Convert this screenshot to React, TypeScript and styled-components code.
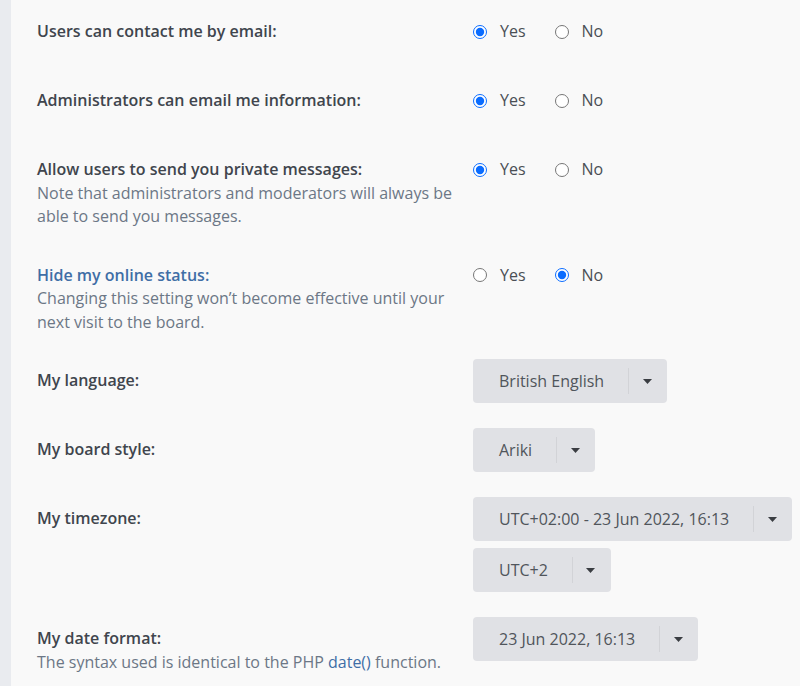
import React from "react";
import styled, { createGlobalStyle } from "styled-components";

const Global = createGlobalStyle`
  html, body { margin: 0; padding: 0; background: #f9f9f9; }
  body { font-family: "Open Sans", "Noto Sans", sans-serif; }
  * { box-sizing: border-box; }
`;

const Page = styled.div`
  min-height: 686px;
  border-left: 11px solid #e9ebef;
  background: #f9f9f9;
  padding: 10px 0 0 26px;
  display: flex;
  flex-direction: column;
  gap: 25px;
`;

const Row = styled.div`
  display: grid;
  grid-template-columns: 436px 1fr;
  align-items: start;
`;

const Term = styled.div`
  padding-top: 10px;
  font-size: 16px;
  line-height: 23.5px;
`;

const Label = styled.div<{ $active?: boolean }>`
  font-weight: 600;
  color: ${(p) => (p.$active ? "#3f6ea6" : "#40454d")};
`;

const Explain = styled.div`
  color: #6c7786;
  font-weight: 400;
`;

const Link = styled.a`
  color: #3f6ea6;
  text-decoration: none;
`;

const Choices = styled.div`
  display: flex;
  align-items: flex-start;
  gap: 29px;
  padding-top: 10px;
  height: 44px;
`;

const Choice = styled.label`
  display: flex;
  align-items: center;
  gap: 13px;
  font-size: 16px;
  line-height: 23.5px;
  color: #4a4f55;
`;

const Radio = styled.input`
  margin: 0;
  width: 14px;
  height: 14px;
  accent-color: #0a6cff;
`;

const Stack = styled.div`
  display: flex;
  flex-direction: column;
  align-items: flex-start;
  gap: 7px;
`;

const Select = styled.div`
  display: inline-flex;
  align-items: center;
  height: 44px;
  background: #e0e1e5;
  border-radius: 4px;
  font-size: 16px;
  color: #50555b;
`;

const Value = styled.span`
  padding: 0 24px 0 26px;
  white-space: nowrap;
`;

const Divider = styled.span`
  width: 1px;
  height: 26px;
  background: #d2d3d7;
`;

const Caret = styled.span`
  width: 38px;
  display: flex;
  justify-content: center;
  align-items: center;
  padding-right: 2px;
`;

const Arrow = () => (
  <svg width="9" height="5" viewBox="0 0 9 5">
    <path d="M0 0h9L4.5 5z" fill="#3a3d42" />
  </svg>
);

const Dropdown = ({ value }: { value: string }) => (
  <Select>
    <Value>{value}</Value>
    <Divider />
    <Caret>
      <Arrow />
    </Caret>
  </Select>
);

const YesNo = ({ name, yes }: { name: string; yes: boolean }) => (
  <Choices>
    <Choice>
      <Radio type="radio" name={name} defaultChecked={yes} />
      Yes
    </Choice>
    <Choice>
      <Radio type="radio" name={name} defaultChecked={!yes} />
      No
    </Choice>
  </Choices>
);

export default function App() {
  return (
    <>
      <Global />
      <Page>
        <Row>
          <Term>
            <Label>Users can contact me by email:</Label>
          </Term>
          <YesNo name="email" yes />
        </Row>
        <Row>
          <Term>
            <Label>Administrators can email me information:</Label>
          </Term>
          <YesNo name="massemail" yes />
        </Row>
        <Row>
          <Term>
            <Label>Allow users to send you private messages:</Label>
            <Explain>
              Note that administrators and moderators will always be able to send you messages.
            </Explain>
          </Term>
          <YesNo name="pm" yes />
        </Row>
        <Row>
          <Term>
            <Label $active>Hide my online status:</Label>
            <Explain>
              Changing this setting won’t become effective until your next visit to the board.
            </Explain>
          </Term>
          <YesNo name="hide" yes={false} />
        </Row>
        <Row>
          <Term>
            <Label>My language:</Label>
          </Term>
          <Stack>
            <Dropdown value="British English" />
          </Stack>
        </Row>
        <Row>
          <Term>
            <Label>My board style:</Label>
          </Term>
          <Stack>
            <Dropdown value="Ariki" />
          </Stack>
        </Row>
        <Row>
          <Term>
            <Label>My timezone:</Label>
          </Term>
          <Stack>
            <Dropdown value="UTC+02:00 - 23 Jun 2022, 16:13" />
            <Dropdown value="UTC+2" />
          </Stack>
        </Row>
        <Row>
          <Term>
            <Label>My date format:</Label>
            <Explain>
              The syntax used is identical to the PHP <Link href="#">date()</Link> function.
            </Explain>
          </Term>
          <Stack>
            <Dropdown value="23 Jun 2022, 16:13" />
          </Stack>
        </Row>
      </Page>
    </>
  );
}
